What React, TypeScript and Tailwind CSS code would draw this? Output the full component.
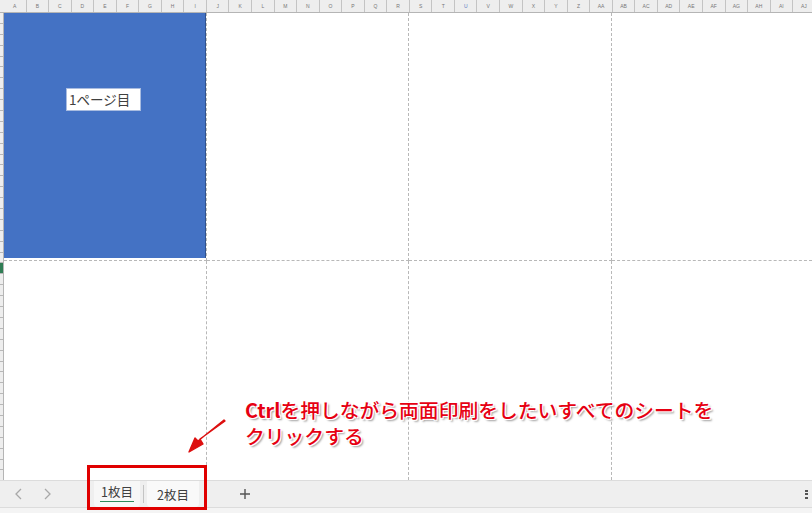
const cols = ["A","B","C","D","E","F","G","H","I","J","K","L","M","N","O","P","Q","R","S","T","U","V","W","X","Y","Z","AA","AB","AC","AD","AE","AF","AG","AH","AI","AJ"];
const rows = Array.from({ length: 43 }, (_, i) => i);
const font = { fontFamily: '"Noto Sans CJK JP", "Noto Sans", sans-serif' };

export default function App() {
  return (
    <div className="relative w-[812px] h-[513px] overflow-hidden bg-white flex flex-col" style={font}>
      <div className="flex h-[13px] shrink-0 bg-[#eeeeee] border-b border-[#b5b5b5]">
        <div className="w-[4px] shrink-0" />
        {cols.map((c) => (
          <div key={c} className={`w-[22.55px] shrink-0 border-r border-[#c4c4c4] flex items-center justify-center text-[5px] leading-none ${c === "U" ? "text-[#5a78c0]" : "text-[#777777]"}`} style={{ fontFamily: '"Liberation Sans", sans-serif' }}>
            {c}
          </div>
        ))}
      </div>
      <div className="flex h-[467px] shrink-0">
        <div className="w-[4px] shrink-0 bg-[#eeeeee] border-r border-[#b5b5b5] flex flex-col overflow-hidden">
          {rows.map((r) => (
            <div key={r} className={`h-[10.9px] shrink-0 border-b border-[#b8b8b8] ${r === 23 ? "bg-[#2f7d55]" : ""}`} />
          ))}
        </div>
        <div className="flex-1 grid grid-cols-[203px_202px_203px_1fr] grid-rows-[248px_1fr]">
          <div className="border-r border-b border-dashed border-[#b8b8b8] pb-[2px]">
            <div className="h-full bg-[#4472c4] border-r border-[#2f528f] pl-[62px] pt-[75px]">
              <div className="w-[75px] h-[23px] bg-white border border-[#a9bce0] flex items-center pl-[2px] text-[13.5px] leading-none text-[#404040]">1ページ目</div>
            </div>
          </div>
          <div className="border-r border-b border-dashed border-[#b8b8b8]" />
          <div className="border-r border-b border-dashed border-[#b8b8b8]" />
          <div className="border-b border-dashed border-[#b8b8b8]" />
          <div className="border-r border-dashed border-[#b8b8b8]" />
          <div className="border-r border-dashed border-[#b8b8b8]" />
          <div className="border-r border-dashed border-[#b8b8b8]" />
          <div />
        </div>
      </div>
      <div className="h-[28px] shrink-0 bg-[#efefef] border-y border-[#dcdcdc] flex items-center">
        <div className="w-[94px] shrink-0 flex items-center pl-[14px] gap-[20px]">
          <svg width="9" height="12" viewBox="0 0 9 12" fill="none" stroke="#a8a8a8" strokeWidth="1.3"><path d="M7 1 2 6l5 5" /></svg>
          <svg width="9" height="12" viewBox="0 0 9 12" fill="none" stroke="#a8a8a8" strokeWidth="1.3"><path d="M2 1l5 5-5 5" /></svg>
        </div>
        <div className="h-[26px] w-[46px] shrink-0 bg-[#f7f7f7] rounded-b flex justify-center text-[12.5px] leading-[21px] text-[#404040]">
          <span className="h-[21px] border-b border-[#2f8a5c] px-[1px]">1枚目</span>
        </div>
        <div className="w-[1px] h-[18px] bg-[#c4c4c4] mx-[3px]" />
        <div className="h-[26px] w-[52px] shrink-0 bg-[#f9f9f9] rounded-b flex justify-center items-center pt-[2px] text-[12.5px] text-[#404040]">2枚目</div>
        <svg className="ml-[40px]" width="12" height="12" viewBox="0 0 12 12" stroke="#555555" strokeWidth="1.4"><path d="M6 1v10M1 6h10" /></svg>
        <div className="ml-auto mr-[4px] flex flex-col gap-[1.5px]">
          <span className="w-[3px] h-[2px] bg-[#555555]" />
          <span className="w-[3px] h-[2px] bg-[#555555]" />
          <span className="w-[3px] h-[2px] bg-[#555555]" />
        </div>
      </div>
      <div className="flex-1 bg-[#f4f4f4]" />

      <div className="absolute left-[87px] top-[465px] w-[120px] h-[45px] border-[3px] border-[#e00000]" />
      <svg className="absolute left-[186px] top-[418px]" width="42" height="38" viewBox="0 0 42 38">
        <path d="M39 3 14 21l3 5L3 34l6-14 3 3L38 2Z" fill="#dd1010" stroke="#dd1010" strokeWidth="1.4" strokeLinejoin="round" />
      </svg>
      <div className="absolute left-[245px] top-[397px] w-[520px] text-[19.8px] leading-[26px] font-medium text-[#e60012]" style={{ textShadow: "1px 1px 0 #fff, -1px -1px 0 #fff, 1px -1px 0 #fff, -1px 1px 0 #fff, 2px 2px 2px #9a9a9a" }}>
        <div><span className="font-bold">Ctrl</span>を押しながら両面印刷をしたいすべてのシートを</div>
        <div>クリックする</div>
      </div>
    </div>
  );
}
